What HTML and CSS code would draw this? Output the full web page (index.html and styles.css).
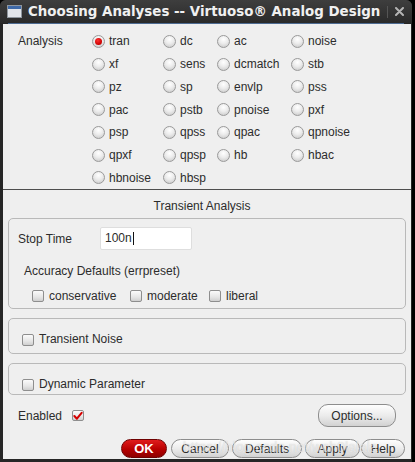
FILE: index.html
```html
<!DOCTYPE html>
<html>
<head>
<meta charset="utf-8">
<title>Choosing Analyses</title>
<link rel="stylesheet" href="styles.css">
</head>
<body>
<div class="window">
  <div class="titlebar">
    <span class="ticon"><span class="ticon-bar"></span></span>
    <span class="ttext">Choosing Analyses -- Virtuoso® Analog Design</span>
    <span class="tsep"></span>
    <svg class="tclose" width="9" height="9" viewBox="0 0 9 9"><path d="M1 1 L8 8 M8 1 L1 8" stroke="#b4b4b4" stroke-width="2" stroke-linecap="round"/></svg>
  </div>
  <div class="tline"></div>
  <div class="content">
    <div class="analysis">
      <div class="alabel">Analysis</div>
      <div class="agrid">
        <label class="radio"><span class="rb on"></span>tran</label>
        <label class="radio"><span class="rb"></span>dc</label>
        <label class="radio"><span class="rb"></span>ac</label>
        <label class="radio"><span class="rb"></span>noise</label>
        <label class="radio"><span class="rb"></span>xf</label>
        <label class="radio"><span class="rb"></span>sens</label>
        <label class="radio"><span class="rb"></span>dcmatch</label>
        <label class="radio"><span class="rb"></span>stb</label>
        <label class="radio"><span class="rb"></span>pz</label>
        <label class="radio"><span class="rb"></span>sp</label>
        <label class="radio"><span class="rb"></span>envlp</label>
        <label class="radio"><span class="rb"></span>pss</label>
        <label class="radio"><span class="rb"></span>pac</label>
        <label class="radio"><span class="rb"></span>pstb</label>
        <label class="radio"><span class="rb"></span>pnoise</label>
        <label class="radio"><span class="rb"></span>pxf</label>
        <label class="radio"><span class="rb"></span>psp</label>
        <label class="radio"><span class="rb"></span>qpss</label>
        <label class="radio"><span class="rb"></span>qpac</label>
        <label class="radio"><span class="rb"></span>qpnoise</label>
        <label class="radio"><span class="rb"></span>qpxf</label>
        <label class="radio"><span class="rb"></span>qpsp</label>
        <label class="radio"><span class="rb"></span>hb</label>
        <label class="radio"><span class="rb"></span>hbac</label>
        <label class="radio"><span class="rb"></span>hbnoise</label>
        <label class="radio"><span class="rb"></span>hbsp</label>
      </div>
    </div>

    <div class="ttitle">Transient Analysis</div>
    <div class="group tgroup">
      <div class="strow">
        <span class="stlabel">Stop Time</span>
        <span class="input">100n<span class="caret"></span></span>
      </div>
      <div class="acc">Accuracy Defaults (errpreset)</div>
      <div class="checks">
        <label class="chk w98"><span class="cb"></span>conservative</label>
        <label class="chk w79"><span class="cb"></span>moderate</label>
        <label class="chk"><span class="cb"></span>liberal</label>
      </div>
    </div>

    <div class="group opt noise">
      <label class="chk"><span class="cb"></span>Transient Noise</label>
    </div>
    <div class="group opt dyn">
      <label class="chk"><span class="cb"></span>Dynamic Parameter</label>
    </div>

    <div class="enrow">
      <span>Enabled</span>
      <span class="cb en"><svg width="11" height="10" viewBox="0 0 11 10"><path d="M1.5 5 L4.3 8 L9.5 1.5" fill="none" stroke="#d40000" stroke-width="2.2" stroke-linejoin="round" stroke-linecap="round"/></svg></span>
      <span class="btn options">Options...</span>
    </div>

    <div class="btnrow">
      <span class="btn ok">OK</span>
      <span class="btn b-cancel">Cancel</span>
      <span class="btn b-defaults">Defaults</span>
      <span class="btn b-apply">Apply</span>
      <span class="btn b-help">Help</span>
    </div>
  </div>
</div>
<div class="watermark">https://blog.csdn.net/wch0lalala</div>
</body>
</html>
```

FILE: styles.css
```css
* { box-sizing: border-box; }
html, body { margin: 0; padding: 0; }
body {
  width: 415px;
  height: 462px;
  background: #000;
  overflow: hidden;
  position: relative;
  font-family: "Liberation Sans", Arial, sans-serif;
  font-size: 12px;
  color: #2c2c2c;
}
.window {
  width: 412px;
  height: 462px;
  background: #262626;
  border-radius: 6px 6px 0 0;
  display: flex;
  flex-direction: column;
}
.titlebar {
  height: 23px;
  display: flex;
  align-items: center;
  padding-left: 7px;
  background: linear-gradient(#3e3e3e, #2a2a2a);
  border-radius: 6px 6px 0 0;
  color: #f0f0f0;
}
.ticon {
  width: 15px;
  height: 13px;
  border: 1px solid #8f969e;
  background: #e2e5ea;
  margin-right: 6px;
  display: flex;
  flex-direction: column;
}
.ticon-bar { height: 3px; background: #3e69a8; }
.ttext {
  font-family: "DejaVu Sans", sans-serif;
  font-weight: bold;
  font-size: 13.4px;
  white-space: nowrap;
}
.tsep { width: 1px; height: 12px; background: #555; margin-left: 7px; }
.tclose { margin-left: 7px; }
.tline { height: 1px; margin: 0 8px; background: #4d6b92; }

.content {
  margin: 0 1px 3px 3px;
  flex: 1;
  background: #efefef;
  display: flex;
  flex-direction: column;
}

/* Analysis radios */
.analysis {
  display: flex;
  height: 166px;
  padding: 6px 0 0 15px;
  border-bottom: 1px solid #4e4e4e;
}
.alabel { width: 74px; line-height: 22.75px; }
.agrid {
  display: grid;
  grid-template-columns: 71px 54px 74px auto;
  grid-auto-rows: 22.75px;
}
.radio { display: flex; align-items: center; gap: 4px; white-space: nowrap; }
.rb {
  width: 13px;
  height: 13px;
  border-radius: 50%;
  border: 1px solid #9a9a9a;
  background: radial-gradient(circle at 50% 30%, #ffffff 0%, #ececec 45%, #c4c4c4 100%);
  display: flex;
  align-items: center;
  justify-content: center;
}
.rb.on::after {
  content: "";
  width: 7px;
  height: 7px;
  border-radius: 50%;
  background: radial-gradient(circle at 40% 35%, #ff3030, #c80000 70%, #900000);
}

/* Transient */
.ttitle {
  height: 28px;
  padding: 9px 10px 0 0;
  line-height: 15px;
  text-align: center;
}
.group {
  margin: 0 5px;
  border: 1px solid #b9b9b9;
  border-radius: 5px;
}
.tgroup { height: 91px; padding: 8px 9px 0 9px; }
.strow { display: flex; align-items: center; height: 23px; }
.stlabel { width: 82px; }
.input {
  width: 92px;
  height: 23px;
  background: #fff;
  border: 1px solid #dedede;
  border-radius: 2px;
  padding-left: 4px;
  line-height: 21px;
  display: flex;
  align-items: center;
}
.caret { width: 1px; height: 13px; background: #111; margin-left: 1px; }
.acc { margin-top: 14px; padding-left: 6px; line-height: 15px; }
.checks {
  display: flex;
  align-items: center;
  height: 15px;
  margin-top: 9.5px;
  padding-left: 14px;
}
.chk { display: flex; align-items: center; gap: 6px; white-space: nowrap; line-height: 15px; }
.w98 { width: 98px; }
.w79 { width: 79px; }
.cb {
  width: 12px;
  height: 12px;
  border: 1px solid #8e8e8e;
  border-radius: 2px;
  background: linear-gradient(#fbfbfb, #e6e6e6 60%, #cfcfcf);
  flex: none;
  display: flex;
  align-items: center;
  justify-content: center;
}
.opt { padding: 13px 0 0 13px; }
.noise { height: 36px; margin-top: 9px; }
.dyn { height: 32px; margin-top: 9px; }
.chk .cb { margin-right: -1px; }

/* Enabled row */
.enrow {
  display: flex;
  align-items: center;
  height: 23px;
  margin-top: 9px;
  padding: 0 15px 0 15px;
}
.cb.en { width: 12px; height: 11px; margin-left: 10px; }
.btn {
  display: flex;
  align-items: center;
  justify-content: center;
  border: 1px solid #8d8d8d;
  border-radius: 10px;
  background: linear-gradient(#fefefe, #ececec 50%, #d2d2d2);
  color: #2c2c2c;
  white-space: nowrap;
}
.options { margin-left: auto; width: 78px; height: 23px; }

.btnrow {
  display: flex;
  justify-content: flex-end;
  gap: 3px;
  height: 19px;
  margin-top: 12px;
  padding-right: 6px;
}
.btnrow .btn { height: 19px; }
.ok {
  width: 46px;
  background: linear-gradient(#e01c1c, #b80000 55%, #8e0000);
  border-color: #6e0000;
  color: #fff;
  font-weight: bold;
  font-size: 13px;
  margin-right: 1px;
}
.b-cancel { width: 58px; }
.b-defaults { width: 70px; }
.b-apply { width: 55px; }
.b-help { width: 44px; margin-left: -2px; }

.watermark {
  position: absolute;
  left: 183px;
  top: 439px;
  font-size: 14px;
  line-height: 16px;
  color: rgba(255, 255, 255, 0.55);
  text-shadow: 0 0 1px rgba(120, 120, 120, 0.35);
  pointer-events: none;
  white-space: nowrap;
}
```
